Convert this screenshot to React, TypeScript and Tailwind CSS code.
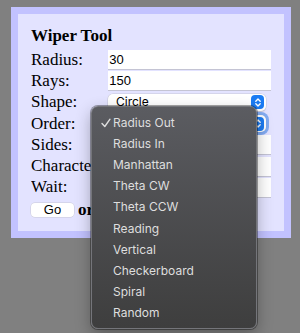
import React from "react"

const serif = { fontFamily: '"Liberation Serif", "Times New Roman", serif' }
const sans = { fontFamily: '"Liberation Sans", Arial, sans-serif' }
const ui = { fontFamily: 'Inter, "Liberation Sans", sans-serif' }

const orders = [
  "Radius Out",
  "Radius In",
  "Manhattan",
  "Theta CW",
  "Theta CCW",
  "Reading",
  "Vertical",
  "Checkerboard",
  "Spiral",
  "Random",
]

function TextInput({ value }: { value?: string }) {
  return (
    <div
      className="w-[164px] h-[19px] bg-white shadow-[0_1px_0_#c4c4d4] flex items-center pl-[1.5px] text-[13px] text-black"
      style={sans}
    >
      {value}
    </div>
  )
}

function Chevrons() {
  return (
    <svg width="8" height="11" viewBox="0 0 8 11" fill="none">
      <path d="M1.8 4.2 L4 2 L6.2 4.2" stroke="white" strokeWidth="1.4" strokeLinecap="round" strokeLinejoin="round" />
      <path d="M1.8 6.8 L4 9 L6.2 6.8" stroke="white" strokeWidth="1.4" strokeLinecap="round" strokeLinejoin="round" />
    </svg>
  )
}

function Select({ value, focused }: { value: string; focused?: boolean }) {
  return (
    <div
      className={
        "relative w-[158px] h-[17px] bg-white rounded-[5px] flex items-center shadow-[0_0_0_0.5px_#c8c8d8,0_1px_1px_rgba(0,0,0,0.15)] " +
        (focused ? "ring-[3px] ring-[#6b9ff0]/80" : "")
      }
    >
      <span className="pl-[8px] text-[12px] text-black flex-1" style={ui}>
        {value}
      </span>
      <div className="w-[13px] h-[14px] mr-[2px] rounded-[4px] bg-[#1c7cf4] flex items-center justify-center">
        <Chevrons />
      </div>
    </div>
  )
}

function Row({ label, children }: { label: string; children: React.ReactNode }) {
  return (
    <div className="flex items-center h-[21.3px]">
      <div className="w-[77px] text-[17px] leading-[20px] text-black whitespace-nowrap overflow-hidden" style={serif}>
        {label}
      </div>
      {children}
    </div>
  )
}

export default function App() {
  return (
    <div className="relative w-[300px] h-[333px] overflow-hidden bg-[#808080]">
      <div className="ml-[11px] mt-[7px] w-[280px] border-[7px] border-[#c2c2ff] bg-[#e3e3ff] px-[13px] pt-[12px] pb-[10px]">
        <div className="text-[17px] font-bold leading-[20px] text-black mb-[3px]" style={serif}>
          Wiper Tool
        </div>
        <Row label="Radius:">
          <TextInput value="30" />
        </Row>
        <Row label="Rays:">
          <TextInput value="150" />
        </Row>
        <Row label="Shape:">
          <Select value="Circle" />
        </Row>
        <Row label="Order:">
          <Select value="" focused />
        </Row>
        <Row label="Sides:">
          <TextInput />
        </Row>
        <Row label="Characters:">
          <TextInput />
        </Row>
        <Row label="Wait:">
          <TextInput />
        </Row>
        <div className="flex items-center h-[22px] mt-[1px]">
          <button
            className="w-[43px] h-[14px] bg-white rounded-[4px] text-[13px] leading-[14px] text-black shadow-[0_0_0_0.5px_#c8c8d8]"
            style={sans}
          >
            Go
          </button>
          <span className="ml-[4px] text-[17px] font-bold text-black" style={serif}>
            or
          </span>
        </div>
      </div>

      <div
        className="absolute left-[91px] top-[106px] w-[166px] h-[223px] rounded-[7px] bg-gradient-to-b from-[#5b5c61] to-[#3e3e3e] border border-[#74757a] shadow-[0_0_0_1px_rgba(0,0,0,0.35),0_6px_16px_rgba(0,0,0,0.3)] pt-[5px]"
        style={ui}
      >
        {orders.map((o, i) => (
          <div key={o} className="relative h-[21.2px] flex items-center pl-[21px] text-[12px] text-[#dedede]">
            {i === 0 && (
              <svg className="absolute left-[9px] top-[6px]" width="10" height="10" viewBox="0 0 10 10" fill="none">
                <path d="M1 5.5 L3.8 8.5 L9 1.2" stroke="#dedede" strokeWidth="1.4" strokeLinecap="round" strokeLinejoin="round" />
              </svg>
            )}
            {o}
          </div>
        ))}
      </div>
    </div>
  )
}
